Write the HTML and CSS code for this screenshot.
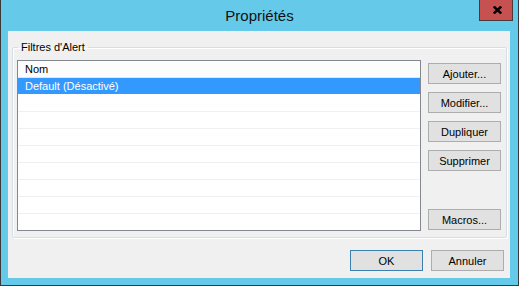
FILE: index.html
```html
<!DOCTYPE html>
<html lang="fr">
<head>
    <meta charset="UTF-8">
    <meta name="viewport" content="width=device-width, initial-scale=1.0">
    <title>Propriétés</title>

    <link rel="stylesheet" href="styles.css">
</head>
<body>
    <div class="window">
        <div class="titlebar">
            <span></span>
            <div class="title">Propriétés</div>
            <button class="close" type="button">
                <svg width="9" height="8" viewBox="0 0 9 8">
                    <path d="M0.8 0.5 L8.2 7.5 M8.2 0.5 L0.8 7.5" stroke="#000" stroke-width="2.4" fill="none"/>
                </svg>
            </button>
        </div>
        <div class="client">
            <fieldset class="group">
                <legend>Filtres d'Alert</legend>
                <div class="group-body">
                    <div class="list">
                        <div class="list-header">Nom</div>
                        <div class="row selected">Default (Désactivé)</div>
                        <div class="row"></div>
                        <div class="row"></div>
                        <div class="row"></div>
                        <div class="row"></div>
                        <div class="row"></div>
                        <div class="row"></div>
                        <div class="row"></div>
                        <div class="row"></div>
                    </div>
                    <div class="side-buttons">
                        <button class="btn" type="button">Ajouter...</button>
                        <button class="btn" type="button">Modifier...</button>
                        <button class="btn" type="button">Dupliquer</button>
                        <button class="btn" type="button">Supprimer</button>
                        <button class="btn macros" type="button">Macros...</button>
                    </div>
                </div>
            </fieldset>
            <div class="footer">
                <button class="btn default" type="button">OK</button>
                <button class="btn" type="button">Annuler</button>
            </div>
        </div>
    </div>
</body>
</html>
```

FILE: styles.css
```css
*{
    margin: 0;
    padding: 0;
    box-sizing: border-box;
}
body{
    font-family: "Liberation Sans", Arial, sans-serif;
    font-size: 11px;
    color: #000;
    background: #fff;
}
.window{
    width: 519px;
    height: 286px;
    background: #65c9e9;
    border: 1px solid #3a3a3a;
    border-top: none;
    display: flex;
    flex-direction: column;
}
.titlebar{
    height: 31px;
    display: grid;
    grid-template-columns: 1fr auto 1fr;
}
.titlebar .title{
    align-self: center;
    font-size: 15px;
    color: #111;
    padding-bottom: 1px;
}
.titlebar .close{
    justify-self: end;
    align-self: start;
    width: 34px;
    height: 21px;
    margin-right: 5px;
    background: #c75050;
    border: 1px solid #4a3a3a;
    border-top: none;
    display: flex;
    align-items: center;
    justify-content: center;
    padding-left: 2px;
}
.client{
    flex: 1;
    margin: 0 8px 7px 7px;
    background: #f0f0f0;
    padding: 8px 3px 7px 4px;
    display: flex;
    flex-direction: column;
}
.group{
    height: 199px;
    border: 1px solid #d5dfe5;
    border-radius: 2px;
    box-shadow: inset 1px 1px 0 #fff, 1px 1px 0 #fff;
    padding: 5px 5px 6px 4px;
}
.group legend{
    line-height: 16px;
    padding: 0 3px;
    margin-left: 1px;
}
.group-body{
    display: flex;
    gap: 7px;
    height: 100%;
}
.list{
    width: 404px;
    height: 171px;
    background: #fff;
    border: 1px solid #828790;
    overflow: hidden;
}
.list-header{
    height: 17px;
    line-height: 16px;
    padding-left: 7px;
    background: #fcfcfc;
    border-bottom: 1px solid #e5e5e5;
}
.row{
    height: 17px;
    line-height: 16px;
    padding-left: 7px;
    border-bottom: 1px solid #f0f0f0;
}
.row.selected{
    background: #3399ff;
    color: #fff;
    border-bottom-color: #fff;
}
.side-buttons{
    width: 73px;
    margin-top: 3px;
    padding-bottom: 1px;
    display: flex;
    flex-direction: column;
    gap: 8px;
}
.btn{
    width: 73px;
    height: 21px;
    background: #e1e1e1;
    border: 1px solid #adadad;
    font-family: inherit;
    font-size: 11px;
    color: #000;
}
.side-buttons .macros{
    margin-top: auto;
}
.btn.default{
    border-color: #3c7fb1;
}
.footer{
    margin-top: 12px;
    padding-right: 3px;
    display: flex;
    justify-content: flex-end;
    gap: 8px;
}
```
